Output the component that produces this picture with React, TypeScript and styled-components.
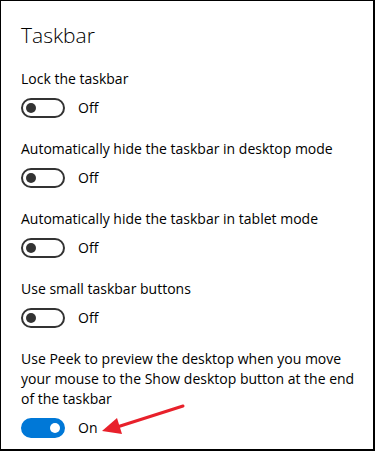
import React from "react";
import styled, { createGlobalStyle } from "styled-components";

const GlobalStyle = createGlobalStyle`
  html, body {
    margin: 0;
    padding: 0;
    background: #ffffff;
  }
  body {
    font-family: "Open Sans", "Noto Sans", "Liberation Sans", sans-serif;
    color: #000000;
  }
`;

interface SettingItem {
  label: React.ReactNode;
  on: boolean;
}

const settings: SettingItem[] = [
  { label: "Lock the taskbar", on: false },
  { label: "Automatically hide the taskbar in desktop mode", on: false },
  { label: "Automatically hide the taskbar in tablet mode", on: false },
  { label: "Use small taskbar buttons", on: false },
  {
    label: (
      <>
        Use Peek to preview the desktop when you move
        <br />
        your mouse to the Show desktop button at the end
        <br />
        of the taskbar
      </>
    ),
    on: true,
  },
];

const App = () => {
  return (
    <>
      <GlobalStyle />
      <Frame>
        <Title>Taskbar</Title>
        <List>
          {settings.map((s, i) => (
            <Setting key={i}>
              <Label>{s.label}</Label>
              <ToggleRow>
                <Toggle $on={s.on}>
                  <Knob $on={s.on} />
                </Toggle>
                <State>{s.on ? "On" : "Off"}</State>
              </ToggleRow>
            </Setting>
          ))}
        </List>
        <Arrow width="90" height="36" viewBox="0 0 90 36">
          <line x1="85" y1="4" x2="16" y2="26" stroke="#e8212b" strokeWidth="3" strokeLinecap="round" />
          <polygon points="4,29 19,16 24,32" fill="#e8212b" />
        </Arrow>
      </Frame>
    </>
  );
};

export default App;

const Frame = styled.div`
  position: relative;
  box-sizing: border-box;
  width: 375px;
  height: 451px;
  border-left: 1px solid #000;
  border-top: 1px solid #000;
  border-right: 2px solid #000;
  border-bottom: 2px solid #000;
  padding: 20px 20px 0 20px;
  overflow: hidden;
`;

const Title = styled.h1`
  margin: 0;
  font-size: 21px;
  font-weight: 300;
  line-height: 28px;
`;

const List = styled.div`
  display: flex;
  flex-direction: column;
  gap: 21px;
  margin-top: 20px;
`;

const Setting = styled.div`
  display: flex;
  flex-direction: column;
  gap: 9px;
`;

const Label = styled.div`
  font-size: 14px;
  line-height: 20px;
  white-space: nowrap;
  color: #000;
`;

const ToggleRow = styled.div`
  display: flex;
  align-items: center;
  gap: 13px;
  height: 20px;
`;

const Toggle = styled.div<{ $on: boolean }>`
  box-sizing: border-box;
  width: 44px;
  height: 20px;
  border-radius: 10px;
  border: 2px solid ${(p) => (p.$on ? "#0078d7" : "#333333")};
  background: ${(p) => (p.$on ? "#0078d7" : "#ffffff")};
  display: flex;
  align-items: center;
  justify-content: ${(p) => (p.$on ? "flex-end" : "flex-start")};
  padding: 0 3px;
`;

const Knob = styled.div<{ $on: boolean }>`
  width: 10px;
  height: 10px;
  border-radius: 50%;
  background: ${(p) => (p.$on ? "#ffffff" : "#333333")};
`;

const State = styled.span`
  font-size: 14px;
  line-height: 20px;
`;

const Arrow = styled.svg`
  position: absolute;
  left: 97px;
  top: 401px;
`;
